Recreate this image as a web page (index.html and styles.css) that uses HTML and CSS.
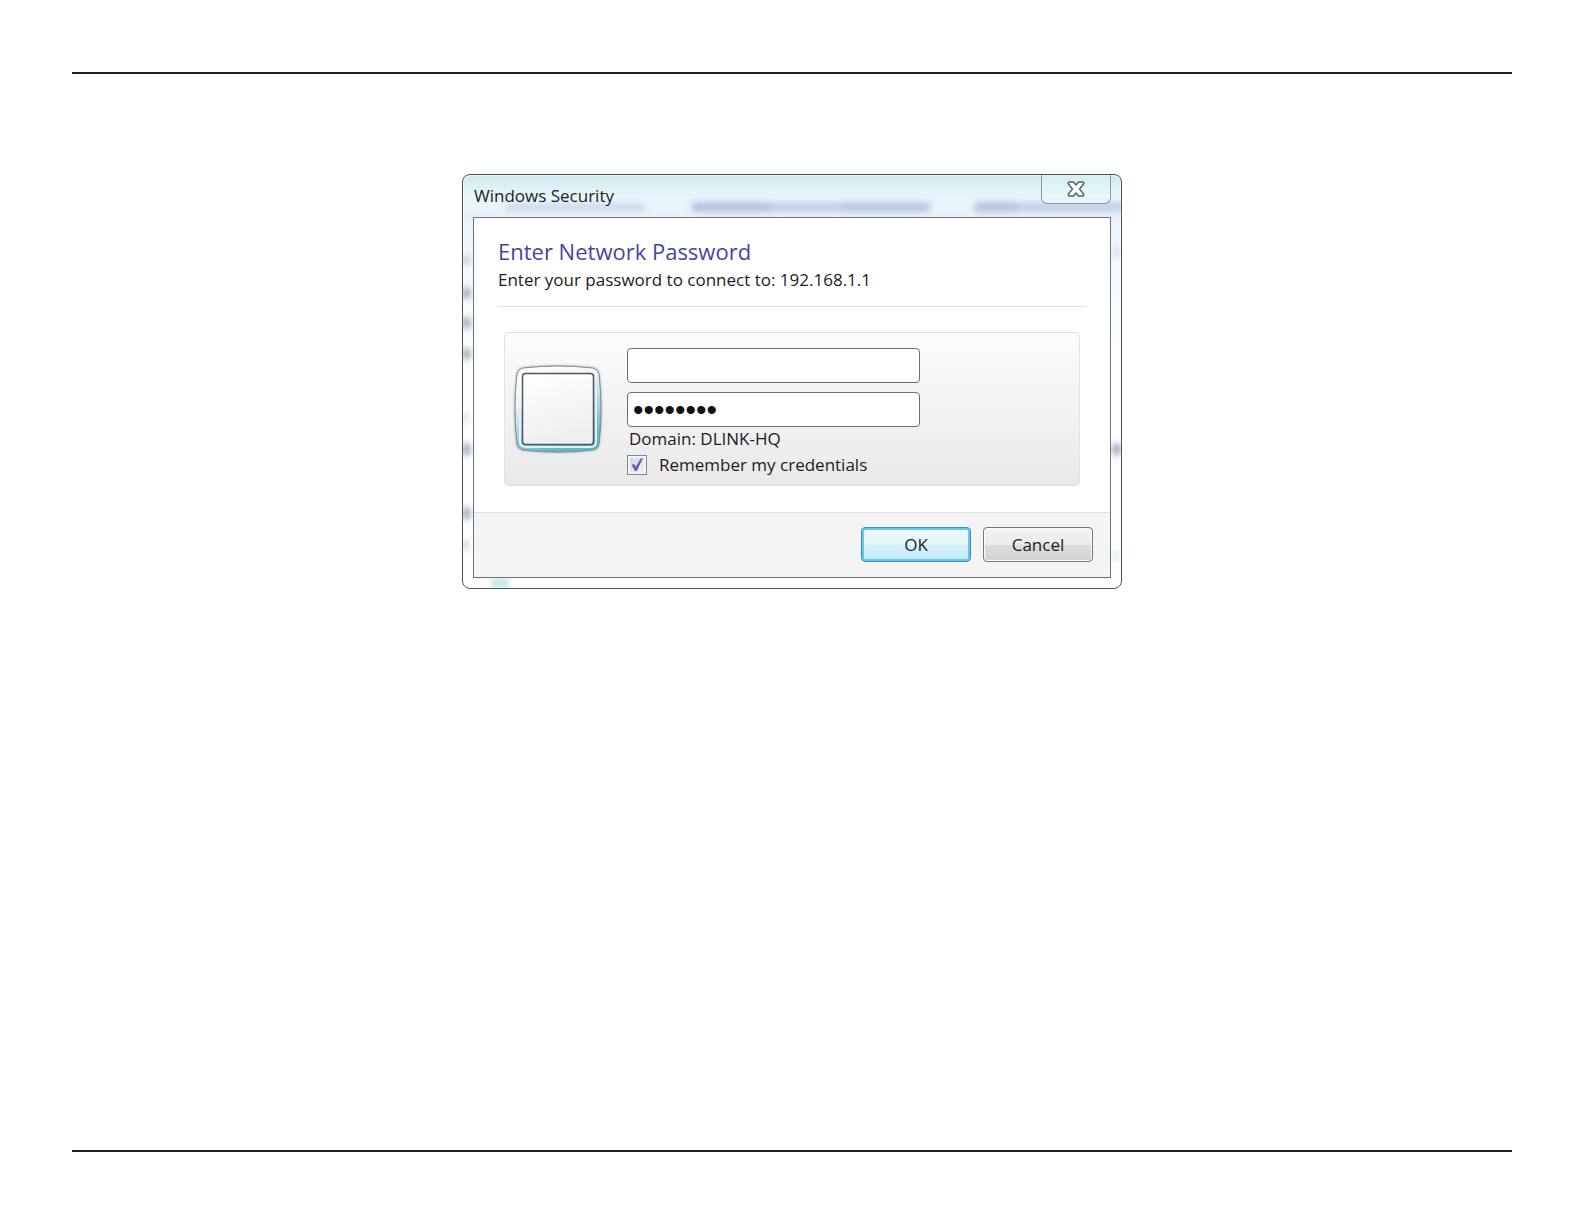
FILE: index.html
```html
<!DOCTYPE html>
<html lang="en">
<head>
    <meta charset="UTF-8">
    <meta name="viewport" content="width=device-width, initial-scale=1.0">
    <title>Windows Security</title>
    <link rel="stylesheet" href="styles.css">
</head>
<body>
    <main class="page">
        <form class="window">
            <!-- blurred shapes behind the glass frame -->
            <svg class="glass" width="658" height="413" viewBox="0 0 658 413" aria-hidden="true">
                <defs>
                    <filter id="soft" x="-20%" y="-100%" width="140%" height="300%">
                        <feGaussianBlur stdDeviation="3"/>
                    </filter>
                </defs>
                <g filter="url(#soft)" fill="#b4c2e0">
                    <rect x="42" y="29" width="140" height="7" opacity=".6"/>
                    <rect x="229" y="27" width="78" height="10"/>
                    <rect x="305" y="27" width="76" height="10" opacity=".7"/>
                    <rect x="379" y="27" width="88" height="10" opacity=".9"/>
                    <rect x="512" y="27" width="42" height="10"/>
                    <rect x="552" y="27" width="109" height="10" opacity=".7"/>
                </g>
                <g filter="url(#soft)" fill="#959aad">
                    <rect x="0" y="81" width="6" height="8" opacity=".6"/>
                    <rect x="0" y="113" width="7" height="10"/>
                    <rect x="0" y="143" width="7" height="10"/>
                    <rect x="0" y="174" width="7" height="10"/>
                    <rect x="0" y="239" width="5" height="8" opacity=".4"/>
                    <rect x="0" y="269" width="7" height="11"/>
                    <rect x="0" y="333" width="7" height="11"/>
                    <rect x="0" y="366" width="5" height="8" opacity=".6"/>
                    <rect x="651" y="73" width="5" height="8" opacity=".4"/>
                    <rect x="650" y="269" width="7" height="11"/>
                    <rect x="28" y="404" width="18" height="8" fill="#a4e0de" opacity=".8"/>
                    <rect x="650" y="377" width="6" height="8" fill="#a4e0de" opacity=".5"/>
                </g>
            </svg>

            <header class="titlebar">
                <span class="title">Windows Security</span>
                <button type="button" class="close" aria-label="Close">
                    <svg width="18" height="16" viewBox="0 0 18 16">
                        <path d="M2 1h4.500l2.500 3 2.500-3H16l1 1.500L12.500 8l4.500 5.500-1 1.500h-4.500L9 12l-2.500 3H2l-1-1.500L5.500 8 1 2.500z" fill="#fff" stroke="#59626d" stroke-width="1.500" stroke-linejoin="round"/>
                    </svg>
                </button>
            </header>

            <div class="client">
                <div class="content">
                    <div class="intro">
                        <h1>Enter Network Password</h1>
                        <p>Enter your password to connect to: 192.168.1.1</p>
                    </div>

                    <div class="credentials">
                        <svg class="avatar" width="88" height="88" viewBox="0 0 88 88" aria-hidden="true">
                            <defs>
                                <linearGradient id="frame" x1="0" y1="0" x2=".4" y2="1">
                                    <stop offset="0" stop-color="#ffffff"/>
                                    <stop offset=".4" stop-color="#f2f5f6"/>
                                    <stop offset=".65" stop-color="#b9d9e0"/>
                                    <stop offset="1" stop-color="#5fb9c9"/>
                                </linearGradient>
                                <linearGradient id="tile" x1="0" y1="0" x2=".3" y2="1">
                                    <stop offset="0" stop-color="#ffffff"/>
                                    <stop offset="1" stop-color="#efefef"/>
                                </linearGradient>
                                <filter id="shadow" x="-10%" y="-10%" width="120%" height="120%">
                                    <feGaussianBlur stdDeviation="1.500"/>
                                </filter>
                            </defs>
                            <path d="M9 3Q44-1 79 3q5 1 6 6 4 35 0 70-1 5-6 6-35 4-70 0-5-1-6-6-4-35 0-70 1-5 6-6z" fill="#7c8689" filter="url(#shadow)"/>
                            <path d="M9 3Q44-1 79 3q5 1 6 6 4 35 0 70-1 5-6 6-35 4-70 0-5-1-6-6-4-35 0-70 1-5 6-6z" fill="url(#frame)" stroke="#848c8e"/>
                            <path d="M6 45v31q0 6 6 6h65q5 0 5-6V20" fill="none" stroke="#d9f3fa" stroke-width="2"/>
                            <rect x="8.500" y="8.500" width="71" height="71" rx="3" fill="url(#tile)" stroke="#55555c" stroke-width="1.500"/>
                        </svg>

                        <div class="fields">
                            <input type="text" class="field" aria-label="User name">
                            <input type="password" class="field" value="password" aria-label="Password">
                            <p class="domain">Domain: DLINK-HQ</p>
                            <label class="remember">
                                <input type="checkbox" checked>
                                Remember my credentials
                            </label>
                        </div>
                    </div>
                </div>

                <footer class="actions">
                    <button type="submit" class="btn btn-default">OK</button>
                    <button type="button" class="btn">Cancel</button>
                </footer>
            </div>
        </form>
    </main>
</body>
</html>
```
FILE: styles.css
```css
* {
    box-sizing: border-box;
}

body {
    margin: 0;
    padding: 72px;
    background: #fff;
    color: #1c1c1c;
    font-family: "Open Sans", "Noto Sans", sans-serif;
    font-size: 17px;
}

h1, p {
    margin: 0;
}

.page {
    min-height: calc(100vh - 144px);
    padding-top: 100px;
    border-top: 2px solid #231f20;
    border-bottom: 2px solid #231f20;
}

.window {
    position: relative;
    max-width: 660px;
    margin: 0 auto;
    padding: 0 10px 10px;
    border: 1px solid #4c5357;
    border-radius: 8px;
    background: linear-gradient(#cdebf0, #e9f6fb 22px, #e9f2fb 42px, #f4fafd 90px, #fdfefe 200px);
    box-shadow: inset 0 0 0 1px rgba(255, 255, 255, 0.6);
    overflow: hidden;
}

.glass {
    position: absolute;
    top: 0;
    left: 0;
}

.titlebar {
    position: relative;
    display: flex;
    justify-content: space-between;
    align-items: flex-start;
    height: 42px;
    padding-left: 1px;
}

.title {
    line-height: 42px;
}

.close {
    display: flex;
    justify-content: center;
    align-items: center;
    width: 70px;
    height: 29px;
    padding: 0;
    border: 1px solid #8b999f;
    border-top: none;
    border-radius: 0 0 6px 6px;
    background: linear-gradient(rgba(215, 241, 236, 0.7), rgba(240, 248, 252, 0.7));
}

.client {
    position: relative;
    border: 1px solid #6c7276;
    background: #fff;
}

.content {
    padding: 17px 24px 26px;
}

.intro {
    padding-bottom: 14px;
    border-bottom: 1px solid #dfdfdf;
}

.intro h1 {
    color: #4545a5;
    font-size: 22px;
    font-weight: normal;
    line-height: 32px;
}

.intro p {
    line-height: 25px;
}

.credentials {
    display: flex;
    align-items: center;
    gap: 25px;
    margin: 25px 6px 0;
    padding: 15px 9px 7px;
    border: 1px solid #e2e2e2;
    border-radius: 4px;
    background: linear-gradient(#fbfcfc, #e9e9e9);
}

.avatar {
    flex: none;
    margin-bottom: 8px;
    overflow: visible;
}

.fields {
    flex: 0 1 293px;
}

.field {
    display: block;
    width: 100%;
    height: 35px;
    margin-bottom: 9px;
    padding: 0 6px;
    border: 1px solid #6e6e6e;
    border-radius: 4px;
    background: #fff;
    color: #111;
    font: inherit;
}

.field[type="password"] {
    margin-bottom: 0;
    padding: 0 5px;
    font-family: "Liberation Sans", sans-serif;
    font-size: 30px;
}

.domain {
    padding-left: 2px;
    line-height: 24px;
}

.remember {
    display: flex;
    align-items: center;
    gap: 12px;
    line-height: 27px;
    white-space: nowrap;
}

.remember input {
    display: grid;
    place-items: center;
    width: 20px;
    height: 20px;
    margin: 0;
    border: 1px solid #85888b;
    background: linear-gradient(135deg, #cfd3da, #f6f6f6);
    box-shadow: inset 0 0 0 2px #f4f4f4;
    appearance: none;
}

.remember input:checked::before {
    content: "";
    width: 12px;
    height: 13px;
    background: #5a63b4;
    clip-path: polygon(6% 52%, 24% 46%, 40% 68%, 80% 4%, 100% 0, 48% 100%, 32% 100%);
}

.actions {
    display: flex;
    justify-content: flex-end;
    gap: 12px;
    padding: 14px 17px 15px;
    border-top: 1px solid #dfdfdf;
    background: #f4f4f4;
}

.btn {
    width: 110px;
    height: 35px;
    padding: 0;
    border: 1px solid #777;
    border-radius: 4px;
    background: linear-gradient(#f3f3f3, #ebebeb 50%, #dcdcdc 51%, #d3d3d3);
    box-shadow: inset 0 0 0 1px #fafafa;
    color: #1c1c1c;
    font: inherit;
}

.btn-default {
    border-color: #3c8fc1;
    background: linear-gradient(#f0fafe, #e3f5fd 50%, #d3effc 51%, #c3e9fa);
    box-shadow: inset 0 0 0 2px #62c8f0;
}
```
